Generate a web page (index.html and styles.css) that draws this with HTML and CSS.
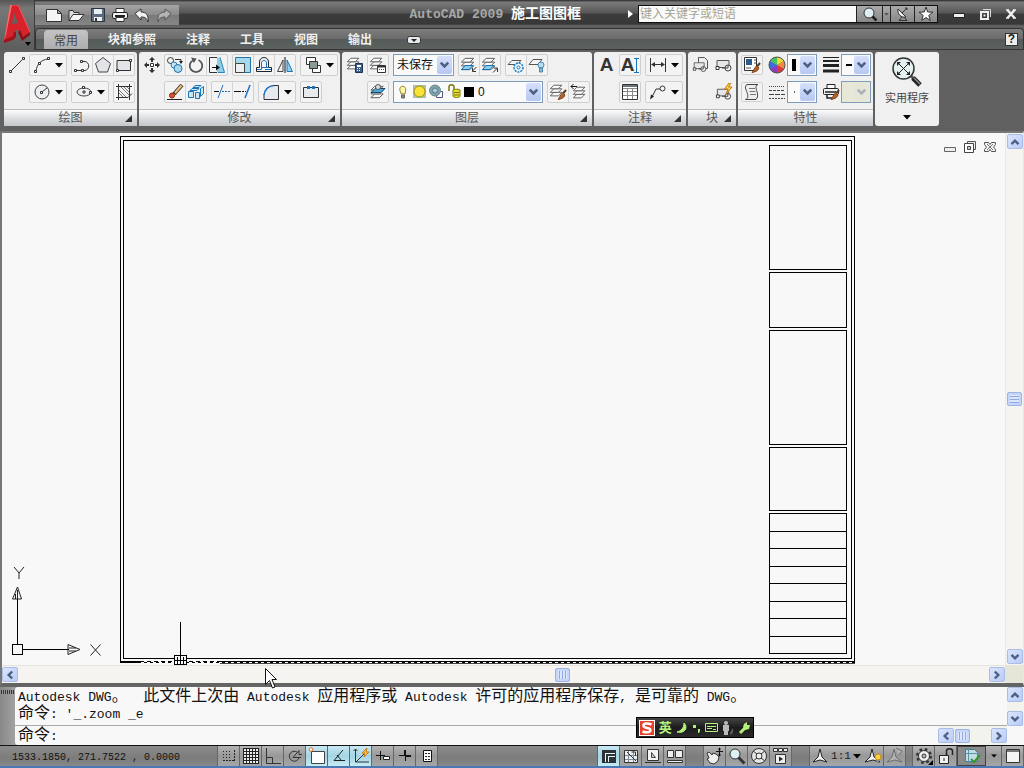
FILE: index.html
```html
<!DOCTYPE html>
<html lang="zh-CN">
<head>
<meta charset="utf-8">
<title>AutoCAD 2009 施工图图框</title>
<link rel="stylesheet" href="styles.css">
</head>
<body>
<svg class="defs" aria-hidden="true">
  <symbol id="chev-d" viewBox="0 0 16 16"><path d="M4 5.500l4 4 4-4" fill="none" stroke="#4d6185" stroke-width="2.800"/></symbol>
  <symbol id="chev-u" viewBox="0 0 16 16"><path d="M4 10.500l4-4 4 4" fill="none" stroke="#4d6185" stroke-width="2.800"/></symbol>
  <symbol id="chev-l" viewBox="0 0 16 16"><path d="M10.500 4l-4 4 4 4" fill="none" stroke="#4d6185" stroke-width="2.800"/></symbol>
  <symbol id="chev-r" viewBox="0 0 16 16"><path d="M5.500 4l4 4-4 4" fill="none" stroke="#4d6185" stroke-width="2.800"/></symbol>
  <symbol id="tri" viewBox="0 0 8 5"><path d="M0 0h8L4 4.500z" fill="#000"/></symbol>
  <symbol id="corner" viewBox="0 0 7 7"><path d="M7 0v7H0z" fill="#333"/></symbol>
  <symbol id="sheets" viewBox="0 0 18 18"><g fill="#fafafa" stroke="#555"><path d="M5.500 10.500h9l-4 4h-9z"/><path d="M5.500 6.500h9l-4 4h-9z"/><path d="M5.500 2.500h9l-4 4h-9z"/></g></symbol>
  <symbol id="block" viewBox="0 0 18 18"><path d="M2 4.500h12v7H2z" fill="#e4e6ea" stroke="#555"/><path d="M1 10.500h3v3H1z" fill="#fff" stroke="#333"/><circle cx="13" cy="12" r="3" fill="#eee" stroke="#444"/><path d="M7 12h6V9" fill="none" stroke="#444"/></symbol>
  <symbol id="brush" viewBox="0 0 18 18"><path d="M17 7l-3 3.500" stroke="#5a3a20" stroke-width="2"/><path d="M13.500 10l2.500 2c-1 3-4 4-7 4.500 1.500-1.500 2-4.500 4.500-6.500z" fill="#b5622a" stroke="#7e431c"/></symbol>
</svg>

<header class="head">
  <button class="app" aria-label="菜单浏览器">
    <svg width="31" height="42" viewBox="0 0 31 42"><path d="M9 0h8l12 27-7 5-3-7-6 1-1 5-9 5z" fill="#d8222b"/><path d="M9 0h2L5 30l-2 6z" fill="#f27275"/><path d="M13 8l4 10-6 1z" fill="#606263"/><path d="M3 35l9-4 1-5 2 1v5l-3 3-9 3z" fill="#a01218"/><path d="M19 25l3 7 7-5v3l-8 6-4-9z" fill="#8d0f15"/><path d="M11 0h6l12 27" fill="none" stroke="#ef5a5e"/><path d="M24 37h6l-3 4z" fill="#000"/></svg>
  </button>
  <div class="headmain">
    <div class="title">
      <div class="quick">
        <button aria-label="新建"><svg class="i" viewBox="0 0 18 18"><path d="M1.500 3.500h11l4 4v8h-15z" fill="#f4f5f6" stroke="#333"/><path d="M12.500 3.500v4h4z" fill="#aaa" stroke="#333"/></svg></button>
        <button aria-label="打开"><svg class="i" viewBox="0 0 18 18"><path d="M2 14.500v-10h4l1 2h5v2" fill="#ddd" stroke="#333"/><path d="M2 14.500l4-6h11l-5 6z" fill="#f4f4f4" stroke="#333"/></svg></button>
        <button aria-label="保存"><svg class="i" viewBox="0 0 18 18"><path d="M2.500 2.500h13v13h-13z" fill="#5d6b80" stroke="#2c3440"/><path d="M5 3h8v5H5z" fill="#e8edf2"/><path d="M5 11h8v4H5z" fill="#eee"/><path d="M6 12h2v3H6z" fill="#333"/></svg></button>
        <button aria-label="打印"><svg class="i" viewBox="0 0 18 18"><path d="M5 6V2.500h8V6" fill="#fff" stroke="#333"/><rect x="1.500" y="6.500" width="15" height="6" rx="1.500" fill="#f0f0f0" stroke="#222"/><path d="M4 10h10" stroke="#222" stroke-width="2"/><path d="M5 11.500h8v4H5z" fill="#fff" stroke="#333"/></svg></button>
        <button aria-label="放弃"><svg class="i" viewBox="0 0 18 18"><path d="M2 7.500L8 3v3c5 0 8 3 7 10-1-4-3-5-7-5v3z" fill="#f2f2f2" stroke="#333"/></svg></button>
        <button aria-label="重做"><svg class="i" viewBox="0 0 18 18"><path d="M16 7.500L10 3v3c-5 0-8 3-7 10 1-4 3-5 7-5v3z" fill="#b4b4b4" stroke="#555"/></svg></button>
      </div>
      <h1><span class="prod">AutoCAD 2009</span> <span class="doc">施工图图框</span></h1>
      <svg class="play" width="5" height="8" viewBox="0 0 5 8"><path d="M0 0l5 4-5 4z" fill="#fff"/></svg>
      <form class="search">
        <input type="text" placeholder="键入关键字或短语" aria-label="搜索">
        <button type="button" class="w25" aria-label="查找"><svg class="i" viewBox="0 0 18 18"><circle cx="8" cy="8" r="5" fill="#dfeef5" stroke="#333"/><path d="M11.500 11.500l4 4" stroke="#222" stroke-width="2.500"/></svg></button>
        <button type="button" class="w8" aria-label="选项"><svg width="5" height="3" viewBox="0 0 8 5"><path d="M0 0h8L4 4.500z" fill="#555"/></svg></button>
        <button type="button" class="w24" aria-label="通讯中心"><svg class="i" viewBox="0 0 18 18"><path d="M4 4c-1 5 3 9 8 8z" fill="#eee" stroke="#333"/><path d="M8 8l5-5M11 3h2v2M8 12l-3 3.500h8L10 12" fill="none" stroke="#333"/></svg></button>
        <button type="button" class="w23" aria-label="收藏夹"><svg class="i" viewBox="0 0 18 18"><path d="M9 2l1.700 5 5.300.2-4.200 3.200 1.500 5.100L9 12.500l-4.300 3 1.500-5.100L2 7.200 7.300 7z" fill="#fff" stroke="#333"/></svg></button>
      </form>
      <div class="winbtns">
        <button aria-label="最小化"><svg class="i" viewBox="0 0 18 18"><path d="M3.500 8.500h11v4h-11z" fill="#eee" stroke="#222"/></svg></button>
        <button aria-label="还原"><svg class="i" viewBox="0 0 18 18"><path d="M7 4.500h7.500V12" fill="none" stroke="#ddd"/><path d="M5 7h7v7H5z" fill="none" stroke="#eee" stroke-width="2"/><path d="M7.500 9.500h2v2h-2z" fill="#eee"/></svg></button>
        <button aria-label="关闭"><svg class="i" viewBox="0 0 18 18"><path d="M5.500 5l7 8M12.500 5l-7 8" stroke="#eee" stroke-width="2.500"/><path d="M4 5h3M11 5h3M4 13h3M11 13h3" stroke="#eee" stroke-width="1.500"/></svg></button>
      </div>
    </div>
    <nav class="tabs">
      <button class="on">常用</button><button>块和参照</button><button>注释</button><button>工具</button><button>视图</button><button>输出</button>
      <button class="mini" aria-label="最小化功能区"><svg width="14" height="8" viewBox="0 0 14 8"><rect x=".5" y=".5" width="13" height="7" rx="2" fill="#e4e8ee" stroke="#333"/><path d="M4 3h6L7 6z" fill="#222"/></svg></button>
      <button class="help" aria-label="帮助">?</button>
    </nav>
  </div>
</header>

<section class="ribbon">
  <div class="panel">
    <div class="pbody">
      <div class="row">
        <button class="plain" aria-label="直线"><svg class="i" viewBox="0 0 18 18"><path class="k" d="M3 15L14 4"/><path class="n" d="M1.500 14.500h2v2h-2zM14.500 1.500h2v2h-2z"/></svg></button>
        <div class="grp"><button class="wide" aria-label="圆弧"><svg class="i" viewBox="0 0 18 18"><path class="k" d="M3 15C4 8 8 4 15 3"/><path class="n" d="M1.500 14.500h2v2h-2zM5.500 6.500h2v2h-2zM14.500 1.500h2v2h-2z"/></svg><svg class="t"><use href="#tri"/></svg></button></div>
        <div class="grp"><button aria-label="多段线"><svg class="i" viewBox="0 0 18 18"><path class="k" d="M2 14.500h10c5-1 5-8 0-9H8"/><path class="n" d="M1.500 13.500h2v2h-2zM8.500 13.500h2v2h-2zM7.500 4.500h2v2h-2z"/></svg></button><button aria-label="多边形"><svg class="i" viewBox="0 0 18 18"><path d="M9 1.500l7.500 6-3 8.500h-9l-3-8.500z" fill="#e2e4e8" stroke="#444"/></svg></button><button aria-label="矩形"><svg class="i" viewBox="0 0 18 18"><path d="M2 4.500h13.500v10H2z" fill="#e2e4e8" stroke="#333"/><path class="n" d="M1.500 13.500h2v2h-2zM14.500 3.500h2v2h-2z"/></svg></button></div>
      </div>
      <div class="row indent">
        <div class="grp"><button class="wide" aria-label="圆"><svg class="i" viewBox="0 0 18 18"><circle cx="9" cy="9" r="7" fill="#eceef2" stroke="#444"/><path class="k" d="M9 9l5-4"/><path class="n" d="M7.500 8.500h2v2h-2z"/></svg><svg class="t"><use href="#tri"/></svg></button></div>
        <div class="grp"><button class="wide" aria-label="椭圆"><svg class="i" viewBox="0 0 18 18"><ellipse cx="9" cy="9" rx="7" ry="4" fill="#eceef2" stroke="#444"/><path class="k" d="M9 7v4M7 9h4"/><path class="n" d="M7.500 3.500h2v2h-2zM14.500 8.500h2v2h-2z"/></svg><svg class="t"><use href="#tri"/></svg></button></div>
        <div class="grp"><button aria-label="图案填充"><svg class="i" viewBox="0 0 18 18"><path class="k" d="M3.500 1v16M14.500 1v16M1 3.500h16M1 14.500h12l4-4"/><path d="M4 7l7 7M4 10l4 4M6 4l8 8M9 4l5 5M12 4l2 2" stroke="#777" fill="none"/></svg></button></div>
      </div>
    </div>
    <div class="pfoot"><span>绘图</span><svg class="c"><use href="#corner"/></svg></div>
  </div>

  <div class="panel modify">
    <div class="pbody">
      <div class="row">
        <button class="plain" aria-label="移动"><svg class="i" viewBox="0 0 18 18"><path d="M9 1l3 3H6zM9 17l3-3H6zM1 9l3-3v6zM17 9l-3-3v6z" fill="#333"/><path d="M9 3v3M9 12v3M3 9h3M12 9h3" stroke="#333" stroke-width="2"/><path class="n" d="M7.500 7.500h3v3h-3z"/></svg></button>
        <div class="grp"><button aria-label="复制"><svg class="i" viewBox="0 0 18 18"><circle class="k" cx="4.500" cy="4.500" r="3"/><circle cx="8" cy="9" r="3" fill="#cbe5f2" stroke="#2a7ab5"/><circle cx="12" cy="12.500" r="4" fill="#a9d8ee" stroke="#2170ad"/><path d="M9 3.500h6v3" class="k"/><path d="M13 5h4l-2 3z" fill="#222"/></svg></button><button aria-label="旋转"><svg class="i" viewBox="0 0 18 18"><path d="M6.500 4a6.300 6.300 0 1 0 5 0" fill="none" stroke="#555" stroke-width="1.800"/><path d="M4 1.500l5.500 1L7 7z" fill="#555"/></svg></button><button aria-label="拉伸"><svg class="i" viewBox="0 0 18 18"><path d="M9 1.500h3l4.500 15H9z" fill="#8ed0e8"/><path d="M12 1.500l4.500 15H10" fill="none" stroke="#2a86b8"/><path d="M9 1.500H1.500v15H9" fill="#f4f4f4" stroke="#333"/><path d="M4 11.500h5" stroke="#111"/><path d="M8 8.500l4 3-4 3z" fill="#111"/></svg></button></div>
        <div class="grp"><button aria-label="缩放"><svg class="i" viewBox="0 0 18 18"><path d="M1.500 1.500h15v15h-15z" fill="#a5daec" stroke="#2473a8"/><path d="M1.500 7.500h9v9h-9z" fill="#eee" stroke="#444"/></svg></button><button aria-label="偏移"><svg class="i" viewBox="0 0 18 18"><path d="M1.500 15.500v-4h3V6c0-6 9-6 9 0v5.500h3v4z" fill="#f4f4f4" stroke="#222"/><path d="M2 13.500h4.500V7c0-3.500 5-3.500 5 0v4M10 13.500h6M7 11.500h7" fill="none" stroke="#1971c0"/></svg></button><button aria-label="镜像"><svg class="i" viewBox="0 0 18 18"><path d="M7 4v11.500H1.500z" fill="#eee" stroke="#444"/><path d="M11 4v11.500h5.500z" fill="#8fd0ea" stroke="#1d76b5"/><path d="M9 1v16" stroke="#111"/></svg></button></div>
        <div class="grp"><button class="wide" aria-label="前置"><svg class="i" viewBox="0 0 18 18"><path d="M2.500 1.500h9v7h-9z" fill="#fff" stroke="#333"/><path d="M8.500 9.500h8v7h-8z" fill="#fff" stroke="#333"/><path d="M5.500 5.500h8v7h-8z" fill="#8a9a98" stroke="#333"/></svg><svg class="t"><use href="#tri"/></svg></button></div>
      </div>
      <div class="row indent">
        <div class="grp"><button aria-label="删除"><svg class="i" viewBox="0 0 18 18"><path d="M16 2l-8 9" stroke="#4a3a28" stroke-width="4"/><path d="M15.500 2.500L9 10" stroke="#e8c48c" stroke-width="2"/><circle cx="6" cy="12.500" r="2.500" fill="#d8582c" stroke="#802a10"/><path d="M1 16.500h15" stroke="#222"/></svg></button><button aria-label="分解"><svg class="i" viewBox="0 0 18 18"><path d="M1.500 8.500h5v6h-5zM8.500 9.500h4v6h-4zM5 5.500h7l-2 2H3zM8 2.500h6l-2 2H6zM13.500 5.500l3-2v7l-3 3z" fill="#cde8f4" stroke="#1877b8"/></svg></button></div>
        <div class="grp"><button aria-label="修剪"><svg class="i" viewBox="0 0 18 18"><path d="M1 8.500h5" stroke="#111"/><path d="M9 8.500h8" stroke="#1971c0" stroke-dasharray="2 1"/><path d="M10 2L5 15" stroke="#1971c0"/></svg></button><button aria-label="延伸"><svg class="i" viewBox="0 0 18 18"><path d="M0 8.500h5" stroke="#111"/><path d="M5 8.500h7" stroke="#111" stroke-dasharray="2 1"/><path d="M16 2l-5 13" stroke="#1971c0" stroke-width="1.500"/></svg></button></div>
        <div class="grp"><button class="wide" aria-label="圆角"><svg class="i" viewBox="0 0 18 18"><path d="M2 16.500C2 7 8 2 16 2v14.500z" fill="#e6eaf0"/><path class="k" d="M12 2.500h4.500v14H2V11"/><path d="M2 12C3 6 7 3 12 2.500" fill="none" stroke="#1971c0" stroke-width="1.500"/></svg><svg class="t"><use href="#tri"/></svg></button></div>
        <div class="grp"><button aria-label="打断"><svg class="i" viewBox="0 0 18 18"><path d="M5 4.500H1.500v10h15v-10H13M8 4.500h2" fill="#e8eaee" stroke="#333"/><path d="M5 3h3v3H5zM10 3h3v3h-3z" fill="#1971c0"/></svg></button></div>
      </div>
    </div>
    <div class="pfoot"><span>修改</span><svg class="c"><use href="#corner"/></svg></div>
  </div>

  <div class="panel layer">
    <div class="pbody">
      <div class="row">
        <button class="plain" aria-label="图层特性"><svg class="i" viewBox="0 0 18 18"><use href="#sheets" width="16" height="16"/><path d="M9.500 7.500h7v9h-7z" fill="#3c5f8c" stroke="#20334d"/><path d="M11 9h4v2h-4z" fill="#fff"/><path d="M11 12.500h4M11 14.500h4" stroke="#fff" stroke-dasharray="1 1"/></svg></button>
        <div class="grp"><button aria-label="图层状态"><svg class="i" viewBox="0 0 18 18"><use href="#sheets" width="16" height="16"/><path d="M8.500 9.500h8v7h-8z" fill="#fff" stroke="#333"/><path d="M9 10.500h7" stroke="#333" stroke-width="2"/><path d="M10 13.500h5" stroke="#555" stroke-dasharray="1 1"/></svg></button></div>
        <div class="combo w62"><select aria-label="图层状态列表"><option>未保存</option></select><svg class="dd"><use href="#chev-d"/></svg></div>
        <div class="grp"><button aria-label="隔离"><svg class="i" viewBox="0 0 18 18"><use href="#sheets" width="17" height="17"/><path d="M5 9.500h8l-4 4H1.500z" fill="#8ccdec" stroke="#1971b0"/><path d="M16.500 11l-4 4M12.500 12v3.500H16" class="k"/></svg></button><button aria-label="取消隔离"><svg class="i" viewBox="0 0 18 18"><use href="#sheets" width="17" height="17"/><path d="M5 9.500h8l-4 4H1.500z" fill="#8ccdec" stroke="#1971b0"/><path d="M12 16.500l4-4M12.500 12h4v4" class="k"/></svg></button></div>
        <div class="grp"><button aria-label="冻结"><svg class="i" viewBox="0 0 18 18"><path d="M5 4.500h9l-4 4H1z" fill="#f4f4f4" stroke="#555"/><circle cx="11.500" cy="11.500" r="4.500" fill="#e6f4fa" stroke="#1d79bd" stroke-width="1.500" stroke-dasharray="2 1"/><circle cx="11.500" cy="11.500" r="1.500" fill="#fff" stroke="#1d79bd"/></svg></button><button aria-label="关闭图层"><svg class="i" viewBox="0 0 18 18"><path d="M5 3.500h9l-4 5H1z" fill="#f4f4f4" stroke="#555"/><circle cx="13" cy="9" r="3" fill="#b8def0" stroke="#4b87ad"/><path d="M11.500 12h3v4h-3z" fill="#8db8d0" stroke="#4b87ad"/></svg></button></div>
      </div>
      <div class="row indent">
        <div class="grp"><button aria-label="置为当前"><svg class="i" viewBox="0 0 18 18"><use href="#sheets" y="1" width="18" height="17"/><path d="M6 5.500h10l-4 4H2z" fill="#4fa8d8" stroke="#11466e"/><circle cx="9" cy="4" r="2.500" fill="#ddd" stroke="#555"/></svg></button></div>
        <div class="combo w150"><select class="layersel" aria-label="图层"><option>0</option></select>
          <svg class="lamps" width="80" height="18" viewBox="0 0 80 18"><path d="M5 10C0 1 13 1 9 10v1H5z" fill="#fdf6a8" stroke="#8a7a20"/><path d="M5.500 12h3v3h-3z" fill="#888" stroke="#666"/><path d="M17 2h13v13H17z" fill="#a8c4a4"/><circle cx="23.500" cy="8.500" r="5.500" fill="#fde236" stroke="#9a8a10"/><path d="M40.500 8.500h6v6h-6z" fill="#fff" stroke="#557"/><circle cx="39" cy="7.500" r="5.500" fill="#7fa3ad" stroke="#68878f"/><circle cx="39" cy="7.500" r="2.500" fill="#b4ccd2" stroke="#4d7e96"/><path d="M53 8V4c0-3 5-3 5 0v3" fill="none" stroke="#7b7a10" stroke-width="1.500"/><path d="M57 7c1-1 7-1 7 0v6c0 2-7 2-7 0z" fill="#e4e22e" stroke="#77750e"/><path d="M58 9.500h5M58 12h5" stroke="#77750e"/><path d="M68 4h10v10H68z"/></svg>
          <svg class="dd"><use href="#chev-d"/></svg></div>
        <div class="grp"><button aria-label="匹配图层"><svg class="i" viewBox="0 0 18 18"><use href="#sheets" width="16" height="16"/><use href="#brush" width="18" height="18"/></svg></button><button aria-label="上一个图层"><svg class="i" viewBox="0 0 18 18"><use href="#sheets" x="2" y="2" width="16" height="16"/><path d="M1 3.500h6M3.500 1L1 3.500 3.500 6" stroke="#111" fill="none"/></svg></button></div>
      </div>
    </div>
    <div class="pfoot"><span>图层</span><svg class="c"><use href="#corner"/></svg></div>
  </div>

  <div class="panel">
    <div class="pbody">
      <div class="row">
        <button class="plain big" aria-label="多行文字">A</button>
        <div class="grp"><button class="big" aria-label="单行文字">A<svg class="caret" width="5" height="15" viewBox="0 0 5 15"><path d="M0 .5h5M0 14.500h5M2.500 1v13" stroke="#1971c0"/></svg></button></div>
        <div class="grp"><button class="wide" aria-label="标注"><svg class="i" viewBox="0 0 18 18"><path class="k" d="M1.500 2v14M16.500 2v14M3 8.500h12"/><path d="M2 8.500L6 6v5zM16 8.500L12 6v5z" fill="#333"/></svg><svg class="t"><use href="#tri"/></svg></button></div>
      </div>
      <div class="row indent">
        <div class="grp"><button aria-label="表格"><svg class="i" viewBox="0 0 18 18"><path d="M1.500 1.500h15v15h-15z" fill="#fff" stroke="#333"/><path d="M2 3h14" stroke="#6a727c" stroke-width="2"/><path d="M2 5.500h14M2 8.500h14M2 12.500h14M6.500 5v11M11.500 5v11" stroke="#888"/></svg></button></div>
        <div class="grp"><button class="wide" aria-label="引线"><svg class="i" viewBox="0 0 18 18"><path class="k" d="M3 14l4-8h4"/><path d="M1 16.500l1-5 3 2z" fill="#222"/><circle class="k" cx="13.500" cy="5.500" r="2.500"/></svg><svg class="t"><use href="#tri"/></svg></button></div>
      </div>
    </div>
    <div class="pfoot"><span>注释</span><svg class="c"><use href="#corner"/></svg></div>
  </div>

  <div class="panel block">
    <div class="pbody">
      <div class="row">
        <button class="plain" aria-label="插入"><svg class="i" viewBox="0 0 18 18"><path d="M6.500 1.500h6l3 3v8h-9z" fill="#eee" stroke="#555"/><use href="#block" y="3" width="16" height="15"/></svg></button>
        <button class="plain second" aria-label="创建"><svg class="i" viewBox="0 0 18 18"><use href="#block"/></svg></button>
      </div>
      <div class="row indent">
        <button class="plain second" aria-label="块编辑器"><svg class="i" viewBox="0 0 18 18"><use href="#block" y="2" width="18" height="17"/><path d="M14 0L9.500 6H13l-2 5 6-7h-3.500L16 0z" fill="#ffd24a" stroke="#c47a12"/></svg></button>
      </div>
    </div>
    <div class="pfoot"><span>块</span><svg class="c"><use href="#corner"/></svg></div>
  </div>

  <div class="panel props">
    <div class="pbody">
      <div class="row">
        <div class="grp"><button aria-label="特性匹配"><svg class="i" viewBox="0 0 18 18"><path d="M1.500 1.500h12v13h-12z" fill="#fff" stroke="#333"/><path d="M3 3h6v6H3z" fill="#2a5c90"/><path d="M11 4h2M11 7h2M3 12h5" stroke="#555"/><use href="#brush" width="18" height="18"/></svg></button></div>
        <svg class="i2" viewBox="0 0 18 18"><circle cx="9" cy="9" r="8" fill="#888"/><path d="M9 9V1a8 8 0 0 1 7 4z" fill="#e8dc3c"/><path d="M9 9l7-4a8 8 0 0 1 0 8z" fill="#f08a3c"/><path d="M9 9l7 4a8 8 0 0 1-7 4z" fill="#d93a3a"/><path d="M9 9v8a8 8 0 0 1-7-4z" fill="#8a3cc0"/><path d="M9 9l-7 4a8 8 0 0 1 0-8z" fill="#3a6ee0"/><path d="M9 9L2 5a8 8 0 0 1 7-4z" fill="#4cc25c"/><circle cx="9" cy="9" r="8" fill="none" stroke="#555"/></svg>
        <div class="combo w30"><select aria-label="颜色"><option></option></select><svg class="sw" width="4" height="12"><path d="M0 0h4v12H0z"/></svg><svg class="dd"><use href="#chev-d"/></svg></div>
        <svg class="i2" viewBox="0 0 18 18"><path d="M1 1.500h16" stroke="#222"/><path d="M1 5h16" stroke="#222" stroke-width="2"/><path d="M1 9.500h16M1 15h16" stroke="#222" stroke-width="3"/></svg>
        <div class="combo w30"><select aria-label="线宽"><option></option></select><svg class="sw" width="6" height="2"><path d="M0 0h6v2H0z"/></svg><svg class="dd"><use href="#chev-d"/></svg></div>
      </div>
      <div class="row">
        <div class="grp"><button aria-label="列表"><svg class="i" viewBox="0 0 18 18"><path d="M4 1.500h11c-3 1-2 4-1 7s1 6-1 8H2.500c3-1 2.500-4 1.500-7s-3-6 0-8z" fill="#eee" stroke="#444"/><path d="M6 5.500h6M6.500 8.500h6M7 11.500h6" stroke="#777"/></svg></button></div>
        <svg class="i2" viewBox="0 0 18 18"><path d="M1 3.500h16" stroke="#444" stroke-dasharray="1 1"/><path d="M1 7.500h16" stroke="#444" stroke-dasharray="3 1"/><path d="M1 11.500h16" stroke="#444" stroke-dasharray="5 1"/><path d="M1 15.500h16" stroke="#444" stroke-dasharray="2 1"/></svg>
        <div class="combo w30"><select aria-label="线型"><option></option></select><svg class="sw" width="4" height="2"><path d="M2 0h1v2H2z" fill="#666"/></svg><svg class="dd"><use href="#chev-d"/></svg></div>
        <svg class="i2" viewBox="0 0 18 18"><path d="M5 5V1.500h8V5" fill="#fff" stroke="#222"/><rect x="1.500" y="5.500" width="15" height="6" rx="1" fill="#f0f0f0" stroke="#222"/><path d="M3 9h11M5 11v4h6" fill="none" stroke="#222" stroke-width="1.500"/><use href="#brush" width="18" height="18"/></svg>
        <div class="combo w30 off"><select aria-label="打印样式" disabled><option></option></select><svg class="dd"><use href="#chev-d"/></svg></div>
      </div>
    </div>
    <div class="pfoot"><span>特性</span></div>
  </div>

  <button class="panel util">
    <svg width="32" height="32" viewBox="0 0 32 32"><path d="M20 20l3 3" stroke="#555" stroke-width="3"/><path d="M22 22l7 7" stroke="#222" stroke-width="5"/><path d="M23 22l6 6" stroke="#888" stroke-width="1.500"/><circle cx="12.500" cy="12.500" r="10.500" fill="#e6f2f2" stroke="#333" stroke-width="1.500"/><path d="M8 8l9 9M17 8l-9 9" stroke="#222"/><path d="M6 6h4l-4 4zM19 6v4l-4-4zM6 19v-4l4 4zM19 19h-4l4-4z" fill="#222"/></svg>
    <span>实用程序</span>
    <svg class="t"><use href="#tri"/></svg>
  </button>
</section>

<main class="view">
  <div class="canvas">
    <svg class="drawing" role="img" aria-label="施工图图框">
      <g transform="translate(-2 -133)" fill="none" stroke="#000" shape-rendering="crispEdges">
        <path d="M120.500 661.500v-525h734v525M123.500 140.500h728v518h-728z"/>
        <path d="M120 661.500h20M220 661.500h635M120 662.500h20"/>
        <path d="M120 662.500h735" stroke-dasharray="3 3"/><path d="M140 661.500h80" stroke-dasharray="4 3"/><path d="M220 663.500h635" stroke="#444"/>
        <path d="M769.500 145.500h77v124h-77zM769.500 272.500h77v55h-77zM769.500 330.500h77v114h-77zM769.500 447.500h77v63h-77zM769.500 513.500h77v140h-77zM769.500 531.500h77M769.500 548.500h77M769.500 566.500h77M769.500 583.500h77M769.500 601.500h77M769.500 618.500h77M769.500 636.500h77"/>
        <path d="M174.500 655.500h12v9h-12z" fill="#f8f8f8"/>
        <path d="M180.500 622v43M174 660.500h13M177.500 657v7M183.500 657v7"/>
        <path d="M12.500 644.500h10v10h-10zM17.500 644v-45M23 649.500h46"/>
        <g shape-rendering="auto"><path d="M17.500 587l-5 12h9zM17.500 590v9M15.500 594v5M80 649.500l-12-5v10zM69 648h7M69 651h7M14 567l5 6v6M24 567l-5 6M90.500 644.500l10 11M100.500 644.500l-10 11" stroke="#222"/></g>
      </g>
    </svg>
    <div class="mdi">
      <button aria-label="最小化"><svg width="14" height="14" viewBox="0 0 14 14"><path d="M1.500 7.500h11v4h-11z" fill="#eee" stroke="#666"/></svg></button>
      <button aria-label="还原"><svg width="14" height="14" viewBox="0 0 14 14"><path d="M4.500 1.500h8v8h-8z" fill="#eee" stroke="#555"/><path d="M1.500 3.500h9v9h-9z" fill="#fff" stroke="#444"/><path d="M4.500 6.500h3v3h-3z" fill="#ccc" stroke="#444"/></svg></button>
      <button aria-label="关闭"><svg width="14" height="14" viewBox="0 0 14 14"><path d="M1.500 2.500h4l1.500 2 1.500-2h4v2L10.500 7l2 2.500v2h-4L7 9.500l-1.500 2h-4v-2l2-2.500-2-2.500z" fill="#f2f2f2" stroke="#555"/><path d="M4 4l6 6M10 4l-6 6" stroke="#777"/></svg></button>
    </div>
  </div>
  <div class="vbar"><button class="sb" aria-label="上"><svg><use href="#chev-u"/></svg></button><span class="thumb v"></span><button class="sb" aria-label="下"><svg><use href="#chev-d"/></svg></button></div>
  <div class="hbar"><button class="sb" aria-label="左"><svg><use href="#chev-l"/></svg></button><span class="thumb h"></span><button class="sb" aria-label="右"><svg><use href="#chev-r"/></svg></button></div>
  <div class="cornerbox"></div>
  <svg class="pointer" width="12" height="21" viewBox="0 0 12 21"><path d="M.5.500v16l4-4 3 7.500 2.500-1-3-7.500h4.500z" fill="#fff" stroke="#111"/></svg>
</main>

<section class="command">
  <div class="grip"></div>
  <div class="log">
    <div class="history">
      <p>Autodesk DWG<b>。</b>  <b>此文件上次由</b> Autodesk <b>应用程序或</b> Autodesk <b>许可的应用程序保存</b>, <b>是可靠的</b> DWG<b>。</b></p>
      <p><b>命令</b>: '_.zoom _e</p>
    </div>
    <div class="cvbar"><button class="sb" aria-label="上"><svg><use href="#chev-u"/></svg></button><button class="sb" aria-label="下"><svg><use href="#chev-d"/></svg></button></div>
    <div class="prompt"><label for="cmd"><b>命令</b>:</label><input id="cmd" type="text"></div>
    <div class="chbar"><button class="sb" aria-label="左"><svg><use href="#chev-l"/></svg></button><span class="thumb h"></span><button class="sb" aria-label="右"><svg><use href="#chev-r"/></svg></button></div>
  </div>
  <div class="ime">
    <svg width="16" height="16" viewBox="0 0 16 16"><path d="M0 0h16v16H0z" fill="#fff"/><path d="M1 1h14v14H1z" fill="#e8402a"/><path d="M12.500 4.500C8 2.500 4 3.500 4.500 6s7 1.500 7 4-4 3-8 1.500" fill="none" stroke="#fff" stroke-width="2.500"/></svg>
    <span>英</span>
    <svg width="12" height="12" viewBox="0 0 12 12"><path d="M8 1c5 5 0 11-7 9 4-1 7-4 7-9z" fill="#b4f07c" stroke="#b4f07c"/></svg>
    <svg width="10" height="12" viewBox="0 0 10 12"><path d="M1 3h3v3H1zM6 7h2v2L7 11H6z" fill="#b4f07c"/></svg>
    <svg width="13" height="10" viewBox="0 0 13 10"><path d="M.5.500h12v8H.5zM2 3.500h9M2 5.500h5M8 6.500h3" fill="none" stroke="#b4f07c"/></svg>
    <svg width="12" height="14" viewBox="0 0 12 14"><circle cx="4" cy="2" r="2" fill="#bbb"/><path d="M1 4h6v6H6v4H2v-4H1z" fill="#bbb"/><path d="M8 12l3-5v4l-2 3z" fill="#666"/></svg>
    <svg width="13" height="14" viewBox="0 0 13 14"><path d="M2 12l6-6" stroke="#b4f07c" stroke-width="3"/><path d="M6 3l3-2v3h3l-1 4-4 1-2-3z" fill="#b4f07c"/></svg>
  </div>
</section>

<footer class="status">
  <output>1533.1850, 271.7522 , 0.0000</output>
  <div class="sgrp">
    <button aria-label="捕捉"><svg class="i" viewBox="0 0 18 18"><path d="M3 4.500h9M3 7.500h9M3 10.500h9" stroke="#222" stroke-dasharray="1 2"/><path d="M3 13.500h12M14.500 3v11" stroke="#222" stroke-dasharray="2 1"/></svg></button>
    <button aria-label="栅格"><svg class="i" viewBox="0 0 18 18"><path d="M1 1h16v16H1z" fill="#eee"/><path d="M1.500 1v16M4.500 1v16M7.500 1v16M10.500 1v16M13.500 1v16M16.500 1v16M1 1.500h16M1 4.500h16M1 7.500h16M1 10.500h16M1 13.500h16M1 16.500h16" stroke="#222"/></svg></button>
    <button aria-label="正交"><svg class="i" viewBox="0 0 18 18"><path class="k" d="M2.500 1v15.500H17M2.500 10.500h6v6"/></svg></button>
    <button aria-label="极轴"><svg class="i" viewBox="0 0 18 18"><path class="k" d="M11 5a5 5 0 1 0 2 6M7 10.500h8M7 10.500l6-7v4h3"/></svg></button>
    <button class="lit" aria-label="对象捕捉"><svg class="i" viewBox="0 0 18 18"><path d="M3.500 4.500h13v12h-13z" fill="#fff" stroke="#444"/><circle cx="3" cy="2.500" r="1.800" fill="#fff" stroke="#e06a20"/></svg></button>
    <button class="lit" aria-label="对象追踪"><svg class="i" viewBox="0 0 18 18"><path d="M13 3L4 13.500h11M7 8l4 5" fill="none" stroke="#222"/></svg></button>
    <button class="lit" aria-label="动态UCS"><svg class="i" viewBox="0 0 18 18"><path class="k" d="M3.500 2v13H17M4 15l8-8M1.500 4l2-2 2 2"/><path d="M15 1l-5 5h3l-1 4 5-5h-3z" fill="#ffc93c" stroke="#c87a14"/></svg></button>
    <button aria-label="动态输入"><svg class="i" viewBox="0 0 18 18"><path d="M2 8.500h9M6.500 4v9" stroke="#111"/><path d="M9.500 9.500h6v3h-6z" fill="#fff" stroke="#222"/></svg></button>
    <button aria-label="线宽"><svg class="i" viewBox="0 0 18 18"><path d="M3 8.500h7" stroke="#111"/><path d="M9 9h6M9 3v6" stroke="#111" stroke-width="2"/><path d="M9.500 9v5" stroke="#111"/></svg></button>
    <button aria-label="快捷特性"><svg class="i" viewBox="0 0 18 18"><path d="M5.500 3.500h8v11h-8z" fill="#fff" stroke="#111"/><path d="M7 6.500h5M7 9.500h5M7 12.500h5" stroke="#222" stroke-dasharray="2 1"/></svg></button>
  </div>
  <span class="fill"></span>
  <div class="sgrp">
    <button class="lit" aria-label="模型"><svg class="i" viewBox="0 0 18 18"><path d="M2 3h14v13H2z" fill="#2b3338"/><path d="M5 6.500h10M5.500 6v9M8 9.500h7M8.500 9v6" stroke="#e6f4f6" fill="none"/></svg></button>
    <button aria-label="布局"><svg class="i" viewBox="0 0 18 18"><path d="M2.500 3.500h13v12h-13z" fill="#eee" stroke="#333"/><path d="M6.500 4v11M3 8.500h12M3 12.500h12M11.500 4v11" stroke="#7d8ba0"/><path class="k" d="M5 5l9 9M9.500 5h4v4"/></svg></button>
    <button aria-label="图纸"><svg class="i" viewBox="0 0 18 18"><path d="M3.500 2.500h11v11h-11z" fill="#f4f4f4" stroke="#333"/><path d="M7.500 5.500v5h4z" fill="#ccc" stroke="#444"/><path d="M1 15.500h16" stroke="#333"/></svg></button>
    <button aria-label="快速查看"><svg class="i" viewBox="0 0 18 18"><path d="M1.500 3.500h6v7h-6zM9.500 3.500h7v7h-7zM1.500 13.500h15v2h-15z" fill="#eee" stroke="#333"/></svg></button>
  </div>
  <span class="gap"></span>
  <div class="sgrp">
    <button aria-label="平移"><svg class="i" viewBox="0 0 18 18"><path d="M1 6l2-1 3 3 1-2 3 1 3 3-1 4-4 3-4-1-3-4 2-1z" fill="#eee" stroke="#333"/><path d="M13.500 1v8M10 4.500h7" stroke="#111"/><path d="M12 2.500L13.500.500 15 2.500zM12 7.500l1.500 2 1.500-2z"/></svg></button>
    <button aria-label="缩放"><svg class="i" viewBox="0 0 18 18"><circle cx="7" cy="7" r="5" fill="#dff0f4" stroke="#333"/><path d="M10.500 10.500l6 6" stroke="#333" stroke-width="3"/></svg></button>
    <button aria-label="控制盘"><svg class="i" viewBox="0 0 18 18"><circle cx="9" cy="9" r="7.500" fill="#e6e6e6" stroke="#333"/><circle cx="9" cy="9" r="3" fill="#eee" stroke="#333"/><path class="k" d="M3 4l4 3M15 4l-4 3M3 14l4-3M15 14l-4-3"/></svg></button>
    <button aria-label="运动"><svg class="i" viewBox="0 0 18 18"><path d="M1.500 1.500h4v3h-4zM6.500 1.500h4v3h-4zM11.500 1.500h4v3h-4zM3.500 7.500h10v9h-10z" fill="#eee" stroke="#333"/><path d="M7 9.500l4 2.500-4 2.500z" fill="#222"/></svg></button>
  </div>
  <span class="gap"></span>
  <div class="sgrp">
    <button class="scale"><svg class="i" viewBox="0 0 18 18"><path d="M9 2l2 8 5 5-7-2-7 2 5-5z" fill="#f0f0f0" stroke="#222"/></svg>1:1<svg class="t"><use href="#tri"/></svg></button>
    <button aria-label="注释可见性"><svg class="i" viewBox="0 0 18 18"><path d="M8 2l2 8 6 5-7-2-8 2 5-5z" fill="#f0f0f0" stroke="#222"/><circle cx="14" cy="10" r="3" fill="#ffd040" stroke="#c88a14"/><path d="M13 13h2v3h-2z" fill="#888"/></svg></button>
    <button aria-label="自动缩放"><svg class="i" viewBox="0 0 18 18"><path d="M8 2l2 8 6 5-7-2-8 2 5-5zM10 1l6 3-3 4" fill="#b4b4b4" stroke="#6d6d6d"/></svg></button>
  </div>
  <div class="sgrp last">
    <button aria-label="工作空间"><svg class="i" viewBox="0 0 18 18"><circle cx="9" cy="9" r="6.500" fill="none" stroke="#333" stroke-width="3" stroke-dasharray="2.500 2.600"/><circle cx="9" cy="9" r="5.500" fill="#eee" stroke="#333"/><circle cx="9" cy="9" r="2" fill="#bbb" stroke="#333"/><path d="M18 13v5h-5z"/></svg></button>
    <button aria-label="锁定"><svg class="i" viewBox="0 0 18 18"><path d="M2.500 8.500h9v8h-9z" fill="#f2f2f2" stroke="#222"/><path d="M9.500 8V4c0-3 6-3 6 0v4" fill="none" stroke="#222" stroke-width="1.500"/><path d="M7 11v3" stroke="#222"/></svg></button>
    <button class="pressed" aria-label="标准"><svg class="i" viewBox="0 0 18 18"><path d="M2.500 2.500h9l3 3v9h-12z" fill="#c4dce2" stroke="#4a7d90"/><path d="M5.500 1v15M1 6.500h15" stroke="#5a93a8"/><path d="M8 12l3 3 6-7" fill="none" stroke="#2f9a32" stroke-width="2"/></svg></button>
    <button class="slim" aria-label="状态栏菜单"><svg width="6" height="4" viewBox="0 0 8 5"><use href="#tri"/></svg></button>
    <button aria-label="全屏显示"><svg class="i" viewBox="0 0 18 18"><path d="M2.500 2.500h13v13h-13z" fill="#f4f4f4" stroke="#333"/><path d="M3 4h12" stroke="#777" stroke-width="2"/></svg></button>
  </div>
</footer>
</body>
</html>
```
FILE: styles.css
```css
* { box-sizing: border-box; }
html, body { height: 100%; }
body { margin: 0; display: flex; flex-direction: column; overflow: hidden; background: #616161; font: 12px/16px "Liberation Sans", "Noto Sans CJK SC", sans-serif; color: #222; }
button { margin: 0; padding: 0; border: 0; background: none; font: inherit; color: inherit; display: flex; align-items: center; justify-content: center; }
svg { display: block; flex: none; }
.defs { position: absolute; width: 0; height: 0; }
.i { width: 18px; height: 18px; }
.t { width: 8px; height: 5px; }
.k { fill: none; stroke: #333; }
.n { fill: #fff; stroke: #333; }

.head { display: flex; height: 50px; background: #5a5c5c; }
.app { width: 35px; align-items: flex-start; padding: 5px 2px 0 0; background: linear-gradient(#555 0, #777 8px, #5c5e5e); border-right: 1px solid #3a3a3a; }
.headmain { flex: 1; min-width: 0; display: flex; flex-direction: column; }
.title { height: 28px; display: flex; align-items: center; background: linear-gradient(#333 0, #444 1px, #7c7c7c 2px, #565656 13px, #3c3c3c 14px, #383838 24px, #666 26px, #5a5a5a); }
.quick { display: flex; align-items: center; width: 144px; height: 20px; margin-top: 2px; padding-left: 10px; gap: 4px; background: linear-gradient(#a4a4a4, #8a8a8a 50%, #7a7a7a 51%, #868686); }
h1 { flex: 1; margin: 0; padding: 0 47px 0 0; text-align: right; white-space: pre; font: bold 13px/20px "Liberation Mono", monospace; color: #fff; }
.prod { color: #a8a8a8; }
.doc { font: bold 14px/16px "Noto Sans CJK SC", sans-serif; }
.search { display: flex; height: 18px; margin-left: 5px; border: 1px solid #111; background: #8f8f8f; }
.search input { width: 217px; border: 0; padding: 0 1px; font: inherit; background: #fafafa; outline: 0; }
.search input::placeholder { color: #a5a595; opacity: 1; }
.search button { border-left: 1px solid #222; background: linear-gradient(#aaa, #888); }
.w25 { width: 26px; } .w8 { width: 8px; } .w24 { width: 24px; } .w23 { width: 23px; }
.winbtns { display: flex; gap: 8px; margin: 0 4px 0 12px; }
.tabs { flex: 1; display: flex; align-items: stretch; padding-left: 3px; border: 1px solid #333; border-radius: 4px 4px 0 0; background: linear-gradient(#7e7e7e, #6a6a6a 50%, #555b59 52%, #5c6260); }
.tabs button { padding: 2px 15px 0; font-weight: bold; color: #f0f0f0; }
.tabs .on { margin: 1px 5px 0; padding: 2px 10px 0; color: #444; font-weight: normal; border-radius: 4px 4px 0 0; background: linear-gradient(#c4c4c4, #adadad); }
.tabs .mini { padding: 2px 20px 0; }
.tabs .help { margin: 4px 5px 3px auto; padding: 0; width: 13px; background: #eee; border: 1px solid #333; color: #222; font-size: 12px; line-height: 11px; }

.ribbon { display: flex; gap: 2px; height: 81px; padding: 2px 4px 5px; background: #606060; }
.panel { display: flex; flex-direction: column; width: 133px; border-radius: 3px 3px 0 0; background: #f0f0f0; flex: none; }
.modify { width: 201px; } .layer { width: 250px; }
.panel:nth-child(4) { width: 92px; } .block { width: 48px; } .props { width: 135px; }
.pbody { flex: 1; display: flex; flex-direction: column; gap: 5px; padding: 2px 0 0 4px; }
.row { display: flex; gap: 4px; height: 22px; }
.indent { margin-left: 21px; }
.plain { width: 17px; }
.second { width: 21px; }
.grp { display: flex; flex: none; border: 1px solid #cfcfcf; border-radius: 2px; background: #f3f3f3; }
.grp button { width: 20px; }
.grp button + button { width: 21px; border-left: 1px solid #d4d4d4; }
.grp .wide { width: 36px; gap: 4px; }
.big { font: 19px/20px "Liberation Sans", sans-serif; font-weight: bold; color: #333; }
.pfoot { height: 17px; display: flex; align-items: center; justify-content: center; border-top: 1px solid #bbb; background: linear-gradient(#fcfcfc, #dcdfe2 50%, #c4c6c9); color: #555; position: relative; }
.pfoot .c { position: absolute; right: 5px; bottom: 4px; width: 7px; height: 7px; }
.combo { position: relative; display: flex; flex: none; height: 22px; border: 1px solid #7f9db9; background: #fafafa; }
.combo select { appearance: none; border: 0; background: none; width: 100%; padding: 0 0 0 3px; font: inherit; color: #111; }
.combo .layersel { padding-left: 84px; }
.dd { position: absolute; right: 1px; top: 1px; width: 15px; height: 18px; border-radius: 2px; background: linear-gradient(#d5e0fb, #b6c8f3); pointer-events: none; }
.lamps { position: absolute; left: 2px; top: 1px; pointer-events: none; }
.sw { position: absolute; left: 4px; top: 0; bottom: 0; margin: auto 0; pointer-events: none; }
.w62 { width: 61px; } .w150 { width: 150px; } .w30 { width: 30px; }
.off { background: #e8e8d8; } .off .dd { background: #e4e4da; opacity: .4; }
.props .pbody { padding-left: 3px; }
.props .row { gap: 0; align-items: center; }
.i2 { width: 18px; height: 18px; margin: 0 1px 0 5px; }
.util { width: 64px; border-radius: 3px; gap: 2px; justify-content: flex-start; }
.util span { font-size: 11px; line-height: 16px; color: #444; }
.util > svg:first-child { margin-top: 4px; }
.util .t { margin-top: 7px; }

.view { flex: 1; min-height: 0; position: relative; display: grid; grid-template: 1fr 18px / 1fr 18px; background: #f7f7f7; border-style: solid; border-color: #777 #e8e8e4 #646464 #777; border-width: 2px 1px 3px 2px; }
.canvas { position: relative; background: #f8f8f8; min-width: 0; min-height: 0; }
.drawing { width: 100%; height: 100%; position: absolute; inset: 0; }
.mdi { position: absolute; top: 7px; right: 8px; display: flex; gap: 6px; }
.vbar, .hbar { display: flex; align-items: center; justify-content: space-between; background: #f5f4f0; }
.vbar { flex-direction: column; padding: 1px 0; border-left: 1px solid #eceae4; }
.hbar { border-top: 1px solid #e6e4dc; }
.cornerbox { background: #e6e6d8; }
.sb { width: 16px; height: 15px; border: 1px solid #a9bde6; border-radius: 2px; background: linear-gradient(135deg, #dbe5fd, #b9cbf6); flex: none; }
.sb svg { width: 14px; height: 14px; }
.thumb { width: 15px; height: 14px; border: 1px solid #9db3e4; border-radius: 2px; }
.thumb.h { background: repeating-linear-gradient(90deg, #8fa9e2 0 1px, #dce6fd 1px 3px); box-shadow: inset 0 0 0 2px #c6d6fb; }
.thumb.v { background: repeating-linear-gradient(#8fa9e2 0 1px, #dce6fd 1px 3px); box-shadow: inset 0 0 0 2px #c6d6fb; }
.hbar .thumb { margin-left: 118px; }
.pointer { position: absolute; left: 263px; bottom: -6px; z-index: 2; }

.command { height: 59px; display: flex; position: relative; background: #9a9a9a; border-top: 1px solid #666; }
.grip { width: 15px; background: linear-gradient(90deg, #888, #a2a2a2); }
.grip::before { content: ""; display: block; height: 4px; margin: 3px 1px; background: repeating-linear-gradient(90deg, #333 0 1px, #999 1px 2px); }
.log { flex: 1; min-width: 0; display: grid; grid-template: 39px 1fr / 1fr 69px 17px; border-radius: 3px 0 0 3px; background: #f8f8f8; }
.history, .prompt { padding-left: 3px; font: 13px/17px "Liberation Mono", monospace; color: #111; }
.history { grid-column: 1 / 3; border-bottom: 1px solid #aaa; }
.history p { margin: 0; height: 17px; line-height: 14px; white-space: pre; }
.log b { font: 16px/14px "Noto Sans CJK SC", sans-serif; font-weight: 400; }
.cvbar { display: flex; flex-direction: column; justify-content: space-between; background: #f3f3ee; }
.prompt { display: flex; align-items: center; }
.prompt input { flex: 1; border: 0; background: none; outline: 0; font: inherit; }
.chbar { grid-column: 2 / 4; margin-right: 17px; display: flex; align-items: center; gap: 1px; background: #f3f3ee; }
.chbar .sb:last-child { margin-left: auto; }
.ime { position: absolute; left: 636px; top: 30px; width: 118px; height: 21px; display: flex; align-items: center; justify-content: space-between; padding: 0 2px; border: 1px solid #000; background: linear-gradient(#444, #1c1c1c 50%, #2a2a2a); color: #b4f07c; font-weight: bold; font-size: 13px; }

.status { height: 23px; display: flex; align-items: stretch; background: linear-gradient(#8c8c8c, #7c7c7c 60%, #888); border-top: 1px solid #111; border-bottom: 2px solid #4a78b4; }
.status output { width: 217px; padding: 3px 0 0 12px; white-space: pre; font: 10px/18px "Liberation Mono", monospace; color: #111; }
.sgrp { display: flex; border-left: 1px solid #666; }
.sgrp button { width: 22px; border-right: 1px solid #666; background: linear-gradient(#b4b4b4, #989898 50%, #a6a6a6); overflow: hidden; }
.sgrp .lit { background: linear-gradient(#c8e8f2, #a4d4e4 50%, #c4ecf4); }
.fill { flex: 1; }
.gap { width: 17px; }
.sgrp .scale { width: 52px; gap: 2px; border-right: 0; font: 11px/16px "Liberation Mono", monospace; }
.last { margin-left: 6px; }
.sgrp .pressed { width: 29px; background: #8a8a8a; border: 1px solid #444; }
.sgrp .slim { width: 16px; }
```
